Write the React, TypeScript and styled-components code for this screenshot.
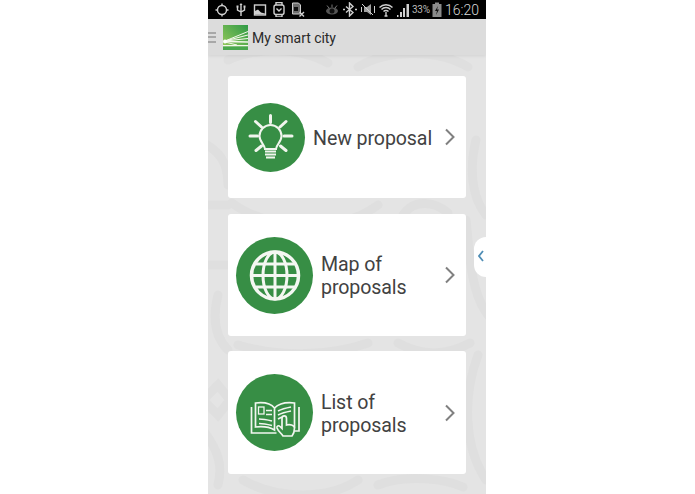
import React from 'react';
import styled, { createGlobalStyle } from 'styled-components';

const GlobalStyle = createGlobalStyle`
  html, body {
    margin: 0;
    background: #fff;
    font-family: Roboto, "Liberation Sans", sans-serif;
  }
`;

const Phone = styled.div`
  position: relative;
  width: 278px;
  height: 494px;
  margin-left: 208px;
  overflow: hidden;
  display: flex;
  flex-direction: column;
  background: #e4e4e4;
`;

const StatusBar = styled.div`
  height: 19px;
  flex: none;
  background: #000;
  display: flex;
  align-items: center;
  justify-content: space-between;
  padding: 0 9px 0 7px;
  color: #d0d0d0;
  position: relative;
  z-index: 2;
`;

const StatusGroup = styled.div<{ $gap: number }>`
  display: flex;
  align-items: center;
  gap: ${({ $gap }) => $gap}px;
`;

const Percent = styled.span`
  font-size: 10px;
  width: 17px;
  letter-spacing: -0.3px;
  color: #b8b8b8;
`;

const Clock = styled.span`
  font-size: 14px;
  font-weight: 300;
  color: #d8d8d8;
  width: 32px;
  text-align: right;
`;

const Header = styled.header`
  height: 36px;
  flex: none;
  background: #dcdcdc;
  display: flex;
  align-items: center;
  box-shadow: 0 1px 3px rgba(0, 0, 0, 0.08);
  position: relative;
  z-index: 1;
`;

const MenuBars = styled.div`
  width: 8px;
  height: 11px;
  margin-right: 7px;
  display: flex;
  flex-direction: column;
  justify-content: space-between;

  span {
    height: 2px;
    background: #a8a8a8;
  }
`;

const Title = styled.h1`
  margin: 2px 0 0 4px;
  font-size: 14px;
  font-weight: 400;
  letter-spacing: -0.05px;
  color: #2a2a2a;
`;

const Content = styled.main`
  position: relative;
  flex: 1;
  display: flex;
  flex-direction: column;
  gap: 16px;
  padding: 21px 20px 0;
`;

const Backdrop = styled.svg`
  position: absolute;
  left: 0;
  top: 0;
  width: 278px;
  height: 439px;
`;

const Card = styled.a`
  position: relative;
  height: 122px;
  flex: none;
  background: #fff;
  border-radius: 3px;
  display: flex;
  align-items: center;
  padding: 0 11px 0 8px;
  text-decoration: none;

  &:last-of-type {
    height: 123px;
    margin-top: -1px;
  }
`;

const Badge = styled.div<{ $size: number }>`
  width: ${({ $size }) => $size}px;
  height: ${({ $size }) => $size}px;
  flex: none;
  border-radius: 50%;
  background: #378e45;

  svg {
    display: block;
  }
`;

const Label = styled.span`
  margin: 2px 0 0 8px;
  font-size: 19.6px;
  line-height: 23px;
  letter-spacing: -0.1px;
  color: #424242;
`;

const Chevron = styled.svg`
  margin-left: auto;
  flex: none;
`;

const SideHandle = styled.div`
  position: absolute;
  right: 0;
  top: 237px;
  width: 12px;
  height: 40px;
  background: #fff;
  border-radius: 20px 0 0 20px;
  display: flex;
  align-items: center;
  padding: 0 0 3px 4px;
  box-sizing: border-box;
  z-index: 1;
`;

const stroke = { fill: 'none', stroke: 'currentColor', strokeWidth: 1.4 };

const StatusIcon = ({ w, children }: { w: number; children: React.ReactNode }) => (
  <svg width={w} height={15} viewBox={`0 0 ${w} 15`} style={{ display: 'block' }}>
    {children}
  </svg>
);

const BulbIcon = () => (
  <svg width="69" height="69" viewBox="0 0 69 69">
    <g fill="none" stroke="#f1f5ee" strokeLinecap="round">
      <path strokeWidth="3" d="M34.500 12.500v7M14 33h7.500M48 33h8M19.500 18.500l6 5.500M50 18.500l-6 5.500M20 47.500l5.500-4.500M50 47.500l-5.500-4.500" />
      <path
        strokeWidth="2"
        d="M29 46c0-4-5.500-7-5.500-13a11 11 0 0 1 22 0c0 6-5.500 9-5.500 13z"
      />
      <path strokeWidth="2" strokeLinecap="butt" d="M29 48.500h11M29 51.500h11M30 54.500h9" />
    </g>
  </svg>
);

const GlobeIcon = () => (
  <svg width="77" height="77" viewBox="0 0 77 77">
    <g fill="none" stroke="#f4f7f2" strokeWidth="3">
      <circle cx="39" cy="38.500" r="23.500" strokeWidth="3.500" />
      <path d="M39 15v47M16 38.500h46M20 27h38M20 50h38" />
      <ellipse cx="39" cy="38.500" rx="12" ry="23.500" />
    </g>
  </svg>
);

const BookIcon = () => (
  <svg width="77" height="77" viewBox="0 0 77 77">
    <g fill="none" stroke="#f2f6f0" strokeWidth="1.700">
      <path d="M15.500 33v26h25M56 57h7V33" />
      <path d="M19.500 29c8-1 15 0 19 5v22c-5-3-11-4-19-3z" />
      <path d="M38.500 34c5-5 12-6 20-5v24l-9 .5" />
      <path d="M30 36.500h6M30 40.500h6M23 45c5 0 9 1 13 2M23 49.500c5 0 9 1 13 2" />
      <path d="M42 37c4-2 8-3 13-4M42 41c4-2 8-3 13-4M42 45c2-1 3-1.500 4-2" />
      <rect x="22.500" y="33" width="5.500" height="7" strokeWidth="1.300" />
      <path
        fill="#378e45"
        d="M47 62c-2-3-5-5-6-8-.5-2 1.500-3 3-1.500l2 2V44.500c0-3.500 4.500-3.500 4.500 0v6.500c3-1 8 0 8 3 0 3-1 6-2.500 8z"
      />
    </g>
  </svg>
);

const Arrow = () => (
  <Chevron width="10" height="18" viewBox="0 0 10 18">
    <path d="M1 1.500 8.500 9 1 16.500" fill="none" stroke="#808080" strokeWidth="2" />
  </Chevron>
);

const Logo = () => (
  <svg width="25" height="25" viewBox="0 0 25 25" style={{ display: 'block', flex: 'none' }}>
    <defs>
      <linearGradient id="logoGreen" x1="0" y1="1" x2="1" y2="0">
        <stop offset="0" stopColor="#9ccb5c" />
        <stop offset="1" stopColor="#2f9a46" />
      </linearGradient>
    </defs>
    <rect width="25" height="25" fill="url(#logoGreen)" />
    <rect y="20" width="25" height="1.500" fill="#f2f7ea" />
    <rect y="21.500" width="25" height="3.500" fill="#4aa84e" />
    <g stroke="#f4f8ec" fill="none">
      <path d="M2 16 25 6.500" strokeWidth="1" />
      <path d="M2 16 25 10" strokeWidth="1.100" />
      <path d="M2 16 25 13.500" strokeWidth="1.200" />
      <path d="M2 16.500 25 17" strokeWidth="1.300" />
      <path d="M2 17 14 20" strokeWidth="1" />
    </g>
    <circle cx="2" cy="16.500" r="2" fill="#fff" />
  </svg>
);

const pattern =
  'M-10 85 C10 95 20 105 20 130 M-5 150 H20 M20 5 C50 -8 90 -8 120 8 M150 12 C180 -6 230 -6 260 12 ' +
  'M24 148 C60 175 130 180 170 150 M195 160 C205 145 225 145 240 158 M268 85 C262 110 262 140 278 160 ' +
  'M258 165 C262 200 262 250 290 270 M-5 210 H20 M10 240 C5 260 5 280 20 295 M30 290 C70 302 120 302 160 288 ' +
  'M190 288 C215 302 240 300 262 288 M270 300 C255 340 255 390 278 425 M10 330 L-5 345 L10 360 L22 345Z ' +
  'M35 425 C70 445 120 445 150 425 M170 430 C200 418 240 425 255 432 M-5 375 C10 395 15 410 10 430';

const proposals = [
  { label: 'New proposal', size: 69, icon: <BulbIcon /> },
  { label: 'Map of\nproposals', size: 77, icon: <GlobeIcon /> },
  { label: 'List of\nproposals', size: 77, icon: <BookIcon /> },
];

const App: React.FC = () => {
  return (
    <>
      <GlobalStyle />
      <Phone>
        <StatusBar>
          <StatusGroup $gap={5}>
            <StatusIcon w={14}>
              <circle cx="7" cy="8" r="4.500" {...stroke} />
              <path d="M7 1.500v2M7 12.500v2M.5 8h2M11.500 8h2" {...stroke} />
            </StatusIcon>
            <StatusIcon w={14}>
              <path d="M7 2v12M3.500 5v3l3.500 2 3.500-2V5" {...stroke} />
              <path d="M5.500 3 7 1l1.500 2z" fill="currentColor" />
              <rect x="2.500" y="3.500" width="2" height="2" fill="currentColor" />
              <rect x="9.500" y="3.500" width="2" height="2" fill="currentColor" />
            </StatusIcon>
            <StatusIcon w={14}>
              <rect x="1.500" y="3" width="11" height="10" {...stroke} />
              <path d="M2 12.500V9l3-1.500 3 3 4 1v1z" fill="currentColor" />
            </StatusIcon>
            <StatusIcon w={14}>
              <rect x="2" y="3" width="10" height="9.500" rx="2" {...stroke} />
              <path d="M4 3V.5h6V3M4 12.500V15h6v-2.500M4.500 6.500 7 9l2.500-2.500" {...stroke} />
            </StatusIcon>
            <StatusIcon w={14}>
              <path d="M1.500 1h6l2 2v9h-8z" fill="#6f6f6f" stroke="currentColor" />
              <rect x="3" y="5" width="4" height="4" fill="#111" />
              <path d="M8.500 10l4.500 4.500M13 10l-4.500 4.500" {...stroke} />
            </StatusIcon>
          </StatusGroup>
          <StatusGroup $gap={3}>
            <StatusIcon w={14}>
              <ellipse cx="7" cy="9" rx="6" ry="3.500" fill="#555" />
              <circle cx="7" cy="9" r="2.500" fill="#111" />
              <path d="M2 3.500 4 6M7 2.500V5.500M12 3.500 10 6" fill="none" stroke="#777" />
            </StatusIcon>
            <StatusIcon w={16}>
              <path d="M4 4.500l7 6-3.500 3.500V1L11 4.500l-7 6" {...stroke} />
              <path d="M1 7.500h2M13 7.500h2" {...stroke} />
            </StatusIcon>
            <StatusIcon w={14}>
              <path d="M3 5h3l4-3v11l-4-3H3z" fill="#a0a0a0" />
              <path d="M1 2l11 11M.5 5v5M13.500 4v7" fill="none" stroke="currentColor" />
            </StatusIcon>
            <StatusIcon w={16}>
              <path d="M1.500 5.500a9 9 0 0 1 13 0M3.500 7.500a6 6 0 0 1 9 0M5.500 9.500a3.500 3.500 0 0 1 5 0" {...stroke} />
              <path d="M8 10v4M6.500 14h3" {...stroke} />
            </StatusIcon>
            <StatusIcon w={12}>
              <path d="M0 15h1.500v-2H0zM3 15h2V10H3zM6 15h2V6H6zM9.500 15H12V2H9.500z" fill="currentColor" />
            </StatusIcon>
            <Percent>33%</Percent>
            <StatusIcon w={10}>
              <rect x="0.500" y="2" width="9" height="13" fill="#8a8a8a" />
              <rect x="3" y="0.500" width="4" height="2" fill="#8a8a8a" />
              <path d="M6 4 3 9h2l-1 4 3-5.500H5z" fill="#111" />
            </StatusIcon>
            <Clock>16:20</Clock>
          </StatusGroup>
        </StatusBar>
        <Header>
          <MenuBars>
            <span />
            <span />
            <span />
          </MenuBars>
          <Logo />
          <Title>My smart city</Title>
        </Header>
        <Content>
          <Backdrop viewBox="0 0 278 439" aria-hidden="true">
            <path d={pattern} fill="none" stroke="#dfdfdf" strokeWidth="9" strokeLinecap="round" />
          </Backdrop>
          {proposals.map((item) => (
            <Card key={item.label}>
              <Badge $size={item.size}>{item.icon}</Badge>
              <Label>
                {item.label.split('\n').map((line) => (
                  <div key={line}>{line}</div>
                ))}
              </Label>
              <Arrow />
            </Card>
          ))}
        </Content>
        <SideHandle>
          <svg width="6" height="12" viewBox="0 0 6 12">
            <path d="M5 1 1 6l4 5" fill="none" stroke="#4f8db5" strokeWidth="1.800" />
          </svg>
        </SideHandle>
      </Phone>
    </>
  );
};

export default App;
